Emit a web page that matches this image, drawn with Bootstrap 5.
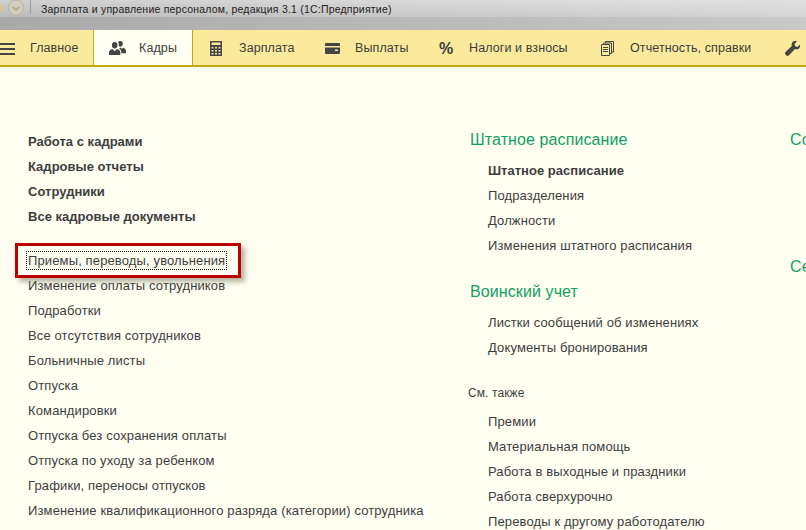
<!DOCTYPE html>
<html lang="ru">
<head>
<meta charset="UTF-8">
<title>Кадры</title>
<link href="https://cdn.jsdelivr.net/npm/bootstrap@5.3.0/dist/css/bootstrap.min.css" rel="stylesheet">
<style>
html, body { height: 530px; overflow: hidden; }
body { background: #fffff2; font-family: "Liberation Sans", Arial, sans-serif; font-size: 13px; color: #3d3d3d; letter-spacing: .13px; }
.title-strip { height: 30px; background: linear-gradient(to bottom, rgba(255,255,255,.45) 0, rgba(255,255,255,.2) 17px, rgba(255,255,255,0) 17px), linear-gradient(to right, #a9a9a9 0, #c9c9c9 100%); }
.title-head { height: 17px; font-size: 10.5px; letter-spacing: .21px; color: #222; padding-left: 41px; line-height: 18px; }
.title-logo { left: 0; top: 0; }
.section-bar { height: 37px; background: #fbea9c; border-bottom: 2px solid #c5a90f; white-space: nowrap; overflow: hidden; }
.section-tab { height: 35px; padding-top: 2px; font-size: 12.5px; color: #3c3c3c; letter-spacing: .1px; }
.section-tab.is-active { background: #fffff2; border-left: 1px solid #c5a90f; border-right: 1px solid #c5a90f; }
.tab-icon { display: flex; align-items: center; flex: none; }
.tab-main { width: 94px; }
.tab-main .tab-icon { width: 30px; }
.tab-staff { width: 100px; padding-left: 15px; margin-left: -1px; }
.tab-staff .tab-icon { width: 30px; }
.tab-pay { width: 117px; padding-left: 18px; margin-left: -1px; }
.tab-pay .tab-icon { width: 29px; }
.tab-out { width: 115px; padding-left: 16px; }
.tab-out .tab-icon { width: 30px; }
.tab-tax { width: 161px; padding-left: 15px; }
.tab-tax .tab-icon { width: 30px; font-size: 16px; font-weight: 700; letter-spacing: 0; }
.tab-docs { width: 185px; padding-left: 16px; }
.tab-docs .tab-icon { width: 29px; }
.tab-tools { padding-left: 15px; }
.page-cols { padding-top: 62px; white-space: nowrap; }
.col-left { width: 460px; padding-left: 28px; flex: none; }
.col-mid { width: 330px; padding-left: 28px; flex: none; margin-top: -2px; }
.col-right { flex: none; width: 16px; overflow: hidden; margin-top: -2px; }
.menu-row { height: 25px; line-height: 25px; }
.menu-row.is-bold { font-weight: 700; letter-spacing: .02px; }
.gap-left { height: 19px; }
.group-title { height: 25px; line-height: 25px; font-size: 16px; color: #0f9f62; margin-left: -18px; letter-spacing: .1px; }
.col-right .group-title { margin-left: 0; }
.group-next { margin-top: 21px; }
.group-body { padding-top: 6px; }
.see-also { height: 25px; line-height: 25px; margin-left: -20px; margin-top: 21px; margin-bottom: 3px; font-size: 12px; letter-spacing: .1px; }
.focus-text { display: inline-block; line-height: 15px; outline: 1px dotted #111; outline-offset: 1px; position: relative; }
.red-frame { position: absolute; left: -13px; top: -10px; width: 226px; height: 35px; border: 3px solid #bf0000; box-shadow: 4px 4px 5px rgba(120,120,100,.55); pointer-events: none; }
.next-service { margin-top: 102px; }
</style>
</head>
<body>
<div class="title-strip position-relative">
    <svg class="title-logo position-absolute" width="32" height="17" viewBox="0 0 32 17">
        <path fill="#e3c27a" d="M0 5h2v7H0z"/>
        <circle cx="16" cy="7.500" r="7.500" fill="#d3cfc0" stroke="#b8b3a4"/>
        <path fill="none" stroke="#a8a393" stroke-width="1.500" d="M12.500 7l3.500 3 3.500-3"/>
        <path stroke="#9c9c9c" d="M30.500 0v14"/>
    </svg>
    <div class="title-head">Зарплата и управление персоналом, редакция 3.1  (1С:Предприятие)</div>
</div>

<div class="section-bar d-flex">
    <div class="section-tab tab-main d-flex align-items-center">
        <span class="tab-icon"><svg width="15" height="14" viewBox="0 0 15 14"><path fill="#444" d="M0 1h15v2H0zM0 6h15v2H0zM0 11h15v2H0z"/></svg></span>
        <span>Главное</span>
    </div>
    <div class="section-tab tab-staff is-active d-flex align-items-center">
        <span class="tab-icon"><svg width="17" height="15" viewBox="0 0 18 16"><path fill="#444" d="M6 1c2 0 3 1.500 3 3.500S8 8 6 8 3 6.500 3 4.500 4 1 6 1zM12 0c1.800 0 2.700 1.300 2.700 3S13.800 6 12 6c-.8 0-1.300-.3-1.700-.7.400-1.700 0-3.500-.9-4.300.5-.6 1.400-1 2.600-1zM0 15v-3c0-2 2-3 3.500-3.500L6 11l2.500-2.500C10 9 12 10 12 12v3zM13 15v-3c0-1.800-.9-3-2.200-4l1.200-1 1.500 1.200 1.500-1C16.500 7.700 18 8.500 18 10.500V13h-5z"/></svg></span>
        <span>Кадры</span>
    </div>
    <div class="section-tab tab-pay d-flex align-items-center">
        <span class="tab-icon"><svg width="12" height="15" viewBox="0 0 12 15"><path fill="#444" d="M0 0h12v15H0zM1.500 1.500v2.500h9V1.500zM1.500 6v1.500h2V6zm3.500 0v1.500h2V6zm3.500 0v1.500h2V6zM1.500 9v1.500h2V9zM5 9v1.500h2V9zm3.500 0v1.500h2V9zM1.500 12v1.500h2V12zM5 12v1.500h2V12zm3.500 0v1.500h2V12z" fill-rule="evenodd"/></svg></span>
        <span>Зарплата</span>
    </div>
    <div class="section-tab tab-out d-flex align-items-center">
        <span class="tab-icon"><svg width="15" height="11" viewBox="0 0 15 11"><path fill="#444" fill-rule="evenodd" d="M1 0h13a1 1 0 0 1 1 1v9a1 1 0 0 1-1 1H1a1 1 0 0 1-1-1V1a1 1 0 0 1 1-1zM0 3v1.500h15V3zM10 6.500v1.500h3V6.500z"/></svg></span>
        <span>Выплаты</span>
    </div>
    <div class="section-tab tab-tax d-flex align-items-center">
        <span class="tab-icon">%</span>
        <span>Налоги и взносы</span>
    </div>
    <div class="section-tab tab-docs d-flex align-items-center">
        <span class="tab-icon"><svg width="13" height="15" viewBox="0 0 13 15"><path fill="none" stroke="#444" d="M.5 3.500h8v11h-8zM2.500 3.500v-1.500h8v10.500h-2M4.500 2v-1.500h8v10.500h-2M2 6.500h5M2 8.500h5M2 10.500h5"/></svg></span>
        <span>Отчетность, справки</span>
    </div>
    <div class="section-tab tab-tools d-flex align-items-center">
        <svg width="15" height="15" viewBox="0 0 15 15"><path fill="#444" d="M15 3.500 12.500 6l-2.300-.8L9.400 3 12 .5C10 -.5 7.500.2 6.800 2.500c-.3 1-.2 1.800 0 2.500L0 11.500 0 13l2 2 1.500-.2L10 8c2.300.8 4.300-.2 5-2.300.2-.8.200-1.500 0-2.200z"/></svg>
    </div>
</div>

<div class="page-cols d-flex">
    <div class="col-left">
        <div class="menu-row is-bold">Работа с кадрами</div>
        <div class="menu-row is-bold">Кадровые отчеты</div>
        <div class="menu-row is-bold">Сотрудники</div>
        <div class="menu-row is-bold">Все кадровые документы</div>
        <div class="gap-left"></div>
        <div class="menu-row"><span class="focus-text">Приемы, переводы, увольнения<span class="red-frame"></span></span></div>
        <div class="menu-row">Изменение оплаты сотрудников</div>
        <div class="menu-row">Подработки</div>
        <div class="menu-row">Все отсутствия сотрудников</div>
        <div class="menu-row">Больничные листы</div>
        <div class="menu-row">Отпуска</div>
        <div class="menu-row">Командировки</div>
        <div class="menu-row">Отпуска без сохранения оплаты</div>
        <div class="menu-row">Отпуска по уходу за ребенком</div>
        <div class="menu-row">Графики, переносы отпусков</div>
        <div class="menu-row">Изменение квалификационного разряда (категории) сотрудника</div>
    </div>
    <div class="col-mid">
        <div class="group-title">Штатное расписание</div>
        <div class="group-body">
            <div class="menu-row is-bold">Штатное расписание</div>
            <div class="menu-row">Подразделения</div>
            <div class="menu-row">Должности</div>
            <div class="menu-row">Изменения штатного расписания</div>
        </div>
        <div class="group-title group-next">Воинский учет</div>
        <div class="group-body">
            <div class="menu-row">Листки сообщений об изменениях</div>
            <div class="menu-row">Документы бронирования</div>
        </div>
        <div class="see-also">См. также</div>
        <div class="menu-row">Премии</div>
        <div class="menu-row">Материальная помощь</div>
        <div class="menu-row">Работа в выходные и праздники</div>
        <div class="menu-row">Работа сверхурочно</div>
        <div class="menu-row">Переводы к другому работодателю</div>
    </div>
    <div class="col-right">
        <div class="group-title">Со</div>
        <div class="group-title next-service">Се</div>
    </div>
</div>
</body>
</html>
